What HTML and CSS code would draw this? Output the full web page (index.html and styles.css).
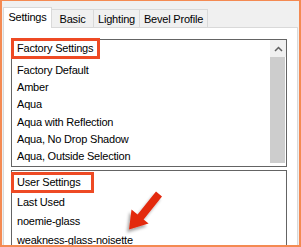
FILE: index.html
```html
<!DOCTYPE html>
<html lang="en">
<head>
    <meta charset="UTF-8">
    <title>Bevel Settings</title>
    <link rel="stylesheet" href="styles.css">
</head>
<body>
    <div class="window">
        <div class="tabs">
            <div class="tab active tab-settings">Settings</div>
            <div class="tab tab-basic">Basic</div>
            <div class="tab tab-lighting">Lighting</div>
            <div class="tab tab-bevel">Bevel Profile</div>
        </div>
        <div class="panel">
            <div class="list list-top">
                <div class="items">
                    <div class="head"><span class="mark mark-factory">Factory Settings</span></div>
                    <div class="row">Factory Default</div>
                    <div class="row">Amber</div>
                    <div class="row">Aqua</div>
                    <div class="row">Aqua with Reflection</div>
                    <div class="row">Aqua, No Drop Shadow</div>
                    <div class="row">Aqua, Outside Selection</div>
                </div>
                <div class="scrollbar">
                    <div class="scroll-up">
                        <svg width="9" height="6" viewBox="0 0 9 6"><path d="M1 5 L4.5 1.5 L8 5" fill="none" stroke="#606060" stroke-width="1.5"/></svg>
                    </div>
                    <div class="thumb"></div>
                </div>
            </div>
            <div class="list list-bottom">
                <div class="head"><span class="mark mark-user">User Settings</span></div>
                <div class="row">Last Used</div>
                <div class="row">noemie-glass</div>
                <div class="row">weakness-glass-noisette</div>
            </div>
        </div>
        <svg class="arrow" width="50" height="50" viewBox="120 185 50 50">
            <defs>
                <filter id="shadow" x="-30%" y="-30%" width="160%" height="160%">
                    <feDropShadow dx="-2" dy="3" stdDeviation="1.5" flood-color="#000" flood-opacity="0.35"/>
                </filter>
            </defs>
            <polygon filter="url(#shadow)" fill="#e3290c"
                points="156,191.5 162,196.4 143.6,219.6 148.6,223.6 129,229.5 131.5,209.4 137.6,214.4"/>
        </svg>
    </div>
</body>
</html>
```

FILE: styles.css
```css
body {
    margin: 0;
    font-family: 'Liberation Sans', Arial, sans-serif;
    font-size: 11px;
    letter-spacing: -0.2px;
    color: #000;
}
.window {
    position: relative;
    width: 301px;
    height: 247px;
    box-sizing: border-box;
    border: 2px solid #f48a52;
    border-top-width: 1px;
    background: #f0f0f0;
    overflow: hidden;
}
.tabs {
    display: flex;
    align-items: flex-end;
    height: 20px;
    padding: 6px 0 0 1px;
}
.tab {
    box-sizing: border-box;
    height: 18px;
    line-height: 18px;
    text-align: center;
    white-space: nowrap;
    border: 1px solid #d9d9d9;
    border-bottom: none;
    margin-left: -1px;
    background: #f0f0f0;
}
.tab.active {
    position: relative;
    z-index: 1;
    height: 21px;
    line-height: 19px;
    margin-bottom: -1px;
    margin-left: 0;
    background: #fff;
}
.tab-settings { width: 49px; }
.tab-basic { width: 43px; }
.tab-lighting { width: 47px; }
.tab-bevel { width: 69px; }
.panel {
    box-sizing: border-box;
    width: 295px;
    height: 230px;
    margin-left: 1px;
    padding: 11px 0 0 7px;
    background: #fff;
    border: 1px solid #d9d9d9;
}
.list {
    width: 276px;
    box-sizing: border-box;
    border: 1px solid #646464;
    background: #fff;
}
.list-top {
    display: flex;
    height: 128px;
}
.list-top .items {
    flex: 1;
}
.list-bottom {
    height: 100px;
    margin-top: 3px;
}
.head {
    height: 22px;
}
.mark {
    display: inline-block;
    box-sizing: border-box;
    height: 21px;
    line-height: 15px;
    margin: -2px 0 0 -1px;
    padding-left: 3px;
    white-space: nowrap;
    border: 3px solid #ee4a24;
}
.mark-factory { width: 89px; }
.mark-user { width: 83px; margin-top: 1px; }
.row {
    padding-left: 5px;
    white-space: nowrap;
}
.list-top .row {
    height: 17.2px;
    line-height: 17.2px;
}
.list-bottom .row {
    height: 19px;
    line-height: 19px;
}
.scrollbar {
    width: 16px;
    display: flex;
    flex-direction: column;
}
.scroll-up {
    height: 17px;
    display: flex;
    justify-content: center;
    align-items: center;
    background: #f0f0f0;
}
.thumb {
    width: 15px;
    height: 106px;
    background: #cdcdcd;
}
.arrow {
    position: absolute;
    left: 118px;
    top: 184px;
}
```
